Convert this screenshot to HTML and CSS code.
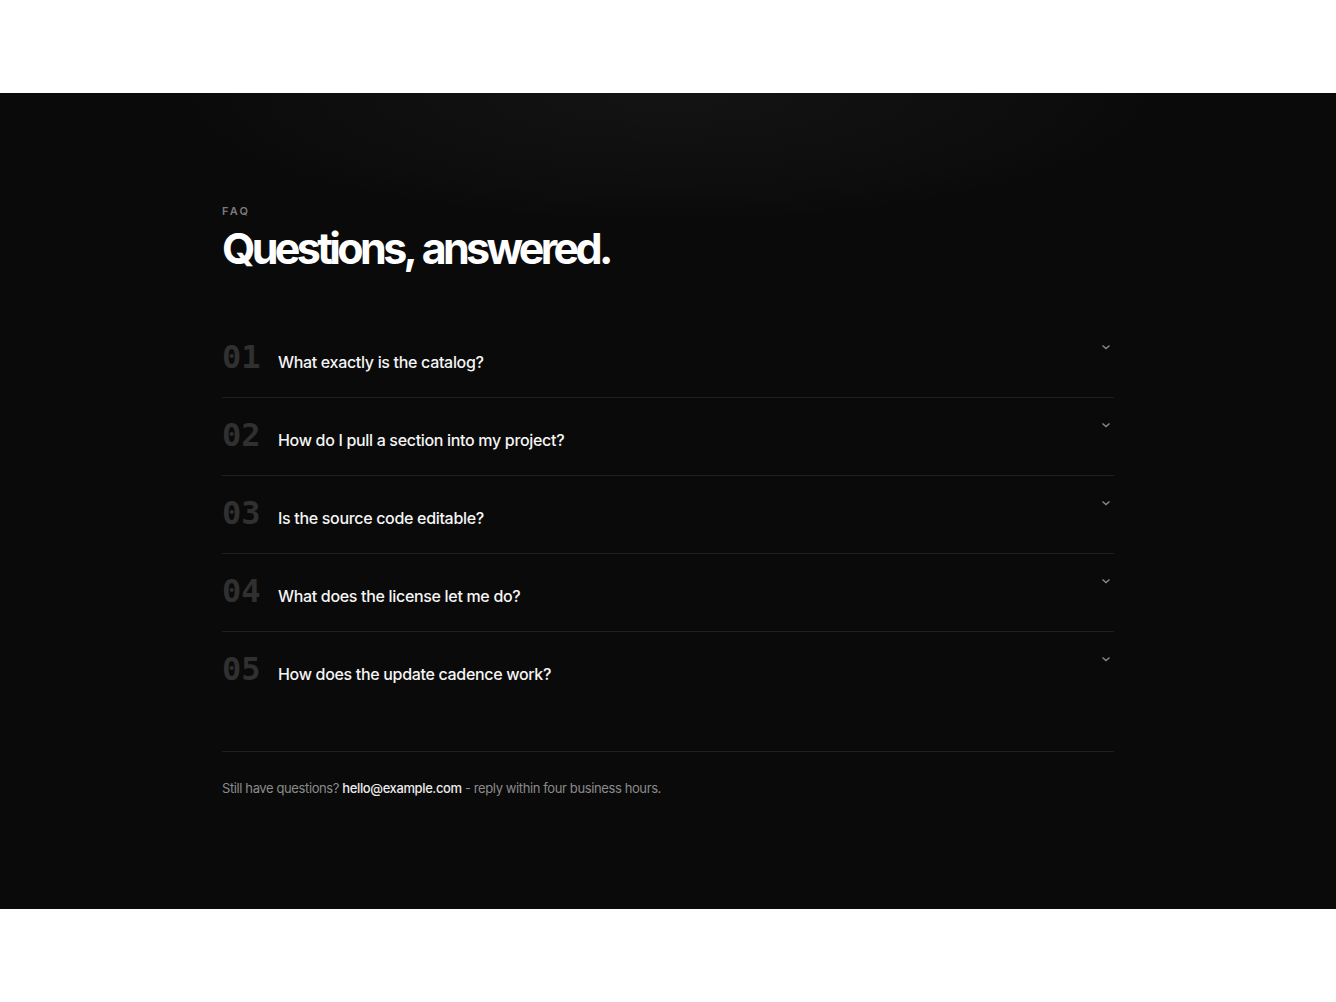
FILE: index.html
```html
<!DOCTYPE html>
<html lang="en">
<head>
  <meta charset="UTF-8" />
  <meta name="viewport" content="width=device-width, initial-scale=1.0" />
  <title>FAQ</title>
  <link rel="stylesheet" href="styles.css">
</head>
<body>
  <section class="faq">
    <div class="faq-inner">
      <p class="eyebrow">FAQ</p>
      <h2 class="title">Questions, answered.</h2>

      <ul class="faq-list">
        <li class="faq-item">
          <span class="num">01</span>
          <span class="question">What exactly is the catalog?</span>
          <svg class="chev" viewBox="0 0 12 12"><path d="M2.5 4.5 6 7.5 9.5 4.5" /></svg>
        </li>
        <li class="faq-item">
          <span class="num">02</span>
          <span class="question">How do I pull a section into my project?</span>
          <svg class="chev" viewBox="0 0 12 12"><path d="M2.5 4.5 6 7.5 9.5 4.5" /></svg>
        </li>
        <li class="faq-item">
          <span class="num">03</span>
          <span class="question">Is the source code editable?</span>
          <svg class="chev" viewBox="0 0 12 12"><path d="M2.5 4.5 6 7.5 9.5 4.5" /></svg>
        </li>
        <li class="faq-item">
          <span class="num">04</span>
          <span class="question">What does the license let me do?</span>
          <svg class="chev" viewBox="0 0 12 12"><path d="M2.5 4.5 6 7.5 9.5 4.5" /></svg>
        </li>
        <li class="faq-item">
          <span class="num">05</span>
          <span class="question">How does the update cadence work?</span>
          <svg class="chev" viewBox="0 0 12 12"><path d="M2.5 4.5 6 7.5 9.5 4.5" /></svg>
        </li>
      </ul>

      <p class="contact">Still have questions? <a href="#">hello@example.com</a> - reply within four business hours.</p>
    </div>
  </section>
</body>
</html>
```

FILE: styles.css
```css
* {
  box-sizing: border-box;
}
body {
  margin: 0;
  min-height: 100vh;
  display: flex;
  align-items: center;
  background: #fff;
  font-family: Inter, "Noto Sans", sans-serif;
}
.faq {
  width: 100%;
  padding: 110px 0 111px;
  background-color: #0a0a0a;
  background-image: radial-gradient(ellipse 37% 16% at 50% 0%, rgba(255, 255, 255, 0.04), rgba(255, 255, 255, 0.015) 70%, transparent 100%);
}
.faq-inner {
  max-width: 892px;
  margin: 0 auto;
}
.eyebrow {
  margin: 0;
  font-size: 11px;
  font-weight: 600;
  letter-spacing: 0.2em;
  color: #7a7a7a;
  line-height: 16px;
}
.title {
  margin: 6px 0 0;
  font-size: 43px;
  font-weight: 700;
  letter-spacing: -0.085em;
  word-spacing: 0.05em;
  line-height: 1.1;
  color: #fff;
}
.faq-list {
  list-style: none;
  margin: 47px 0 0;
  padding: 0;
}
.faq-item {
  display: flex;
  align-items: flex-start;
  gap: 17px;
  height: 78px;
  padding-top: 19px;
  border-bottom: 1px solid #1f1f1f;
}
.faq-item:last-child {
  border-bottom: none;
}
.num {
  width: 39px;
  font-family: "DejaVu Sans Mono", monospace;
  font-size: 32px;
  font-weight: 700;
  line-height: 36px;
  color: #303030;
}
.question {
  flex: 1;
  padding-top: 11px;
  font-size: 16px;
  font-weight: 500;
  letter-spacing: -0.02em;
  line-height: 24px;
  color: #f5f5f5;
}
.chev {
  width: 12px;
  height: 12px;
  margin: 2px 2px 0 0;
  fill: none;
  stroke: #8a8a8a;
  stroke-width: 1.4;
}
.contact {
  margin: 41px 0 0;
  padding-top: 26px;
  border-top: 1px solid #1f1f1f;
  font-size: 13px;
  letter-spacing: -0.03em;
  line-height: 20px;
  color: #8a8a8a;
}
.contact a {
  color: #ececec;
  font-weight: 500;
  text-decoration: none;
}
```
